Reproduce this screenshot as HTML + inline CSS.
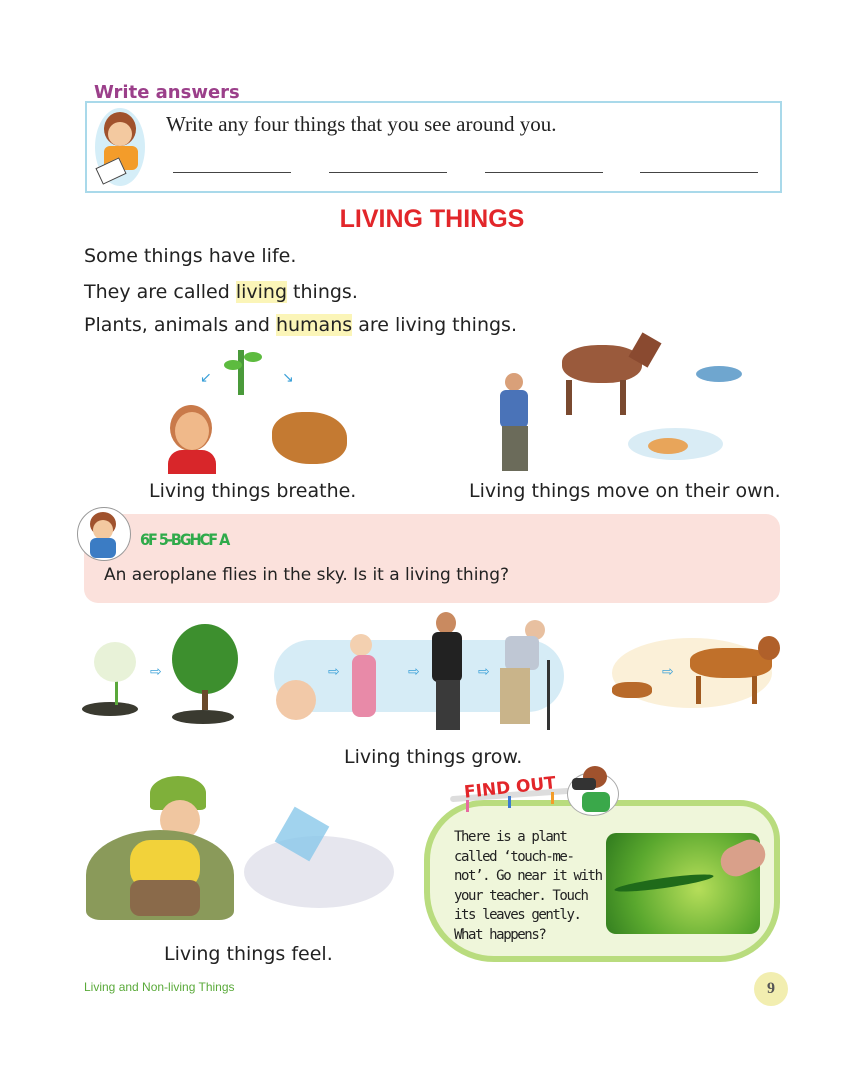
<!DOCTYPE html>
<html><head><meta charset="utf-8"><style>
body{margin:0;width:864px;height:1080px;background:#fff;position:relative;overflow:hidden;font-family:"DejaVu Sans","Liberation Sans",sans-serif;color:#222}
.a{position:absolute}
.t{font-size:19px;color:#222;white-space:nowrap}
.cap{font-size:19px;white-space:nowrap}
.hl{background:#fbf5b8}
.line{position:absolute;top:172px;height:1px;background:#444;width:118px}
.arr{position:absolute;color:#3aa0d8;font-size:14px}
</style></head><body>
<div class="a" style="left:94px;top:82px;font:bold 18px 'DejaVu Sans',sans-serif;color:#9b3f8a;letter-spacing:0">Write answers</div>
<div class="a" style="left:85px;top:101px;width:693px;height:88px;border:2px solid #a9d9ea;background:#fff"></div>
<div class="a" style="left:95px;top:108px;width:50px;height:78px;border-radius:50%;background:#d5eef8"></div>
<div class="a" style="left:104px;top:112px;width:32px;height:34px;border-radius:50%;background:#a0522d"></div>
<div class="a" style="left:108px;top:122px;width:24px;height:24px;border-radius:50%;background:#f3c9a0"></div>
<div class="a" style="left:104px;top:146px;width:34px;height:24px;background:#f39c2a;border-radius:6px"></div>
<div class="a" style="left:98px;top:162px;width:24px;height:16px;background:#fff;border:1px solid #444;transform:rotate(-25deg)"></div>
<div class="a" style="left:166px;top:112px;font:21px 'Liberation Serif',serif;color:#222">Write any four things that you see around you.</div>
<div class="line" style="left:173px"></div><div class="line" style="left:329px"></div><div class="line" style="left:485px"></div><div class="line" style="left:640px"></div>
<div class="a" style="left:0;width:864px;top:205px;text-align:center;font:bold 25px 'Liberation Sans',sans-serif;color:#e2262a">LIVING THINGS</div>
<div class="a t" style="left:84px;top:245px">Some things have life.</div>
<div class="a t" style="left:84px;top:281px">They are called <span class="hl">living</span> things.</div>
<div class="a t" style="left:84px;top:314px">Plants, animals and <span class="hl">humans</span> are living things.</div>
<div class="a" style="left:238px;top:350px;width:6px;height:45px;background:#4a9a3a"></div>
<div class="a" style="left:224px;top:360px;width:18px;height:10px;border-radius:50%;background:#5dbb3f"></div>
<div class="a" style="left:244px;top:352px;width:18px;height:10px;border-radius:50%;background:#5dbb3f"></div>
<div class="arr" style="left:200px;top:370px">↙</div><div class="arr" style="left:282px;top:370px">↘</div>
<div class="a" style="left:170px;top:405px;width:42px;height:46px;border-radius:50%;background:#c97a4a"></div>
<div class="a" style="left:175px;top:412px;width:34px;height:38px;border-radius:50%;background:#f0b98a"></div>
<div class="a" style="left:168px;top:450px;width:48px;height:24px;background:#d8262a;border-radius:14px 14px 0 0"></div>
<div class="a" style="left:272px;top:412px;width:75px;height:52px;border-radius:40% 50% 40% 50%;background:#c47a32"></div>
<div class="a cap" style="left:149px;top:480px">Living things breathe.</div>
<div class="a" style="left:505px;top:373px;width:18px;height:18px;border-radius:50%;background:#d9a079"></div>
<div class="a" style="left:500px;top:390px;width:28px;height:38px;background:#4a73b8;border-radius:6px"></div>
<div class="a" style="left:502px;top:426px;width:26px;height:45px;background:#6b6b5a"></div>
<div class="a" style="left:562px;top:345px;width:80px;height:38px;border-radius:45%;background:#9a5a3c"></div>
<div class="a" style="left:634px;top:336px;width:22px;height:28px;background:#8a4a30;transform:rotate(30deg)"></div>
<div class="a" style="left:566px;top:380px;width:6px;height:35px;background:#7a4a30"></div>
<div class="a" style="left:620px;top:380px;width:6px;height:35px;background:#7a4a30"></div>
<div class="a" style="left:696px;top:366px;width:46px;height:16px;border-radius:50%;background:#6fa6cf"></div>
<div class="a" style="left:628px;top:428px;width:95px;height:32px;border-radius:50%;background:#d9ecf5"></div>
<div class="a" style="left:648px;top:438px;width:40px;height:16px;border-radius:50%;background:#e8a55a"></div>
<div class="a cap" style="left:469px;top:480px">Living things move on their own.</div>
<div class="a" style="left:84px;top:514px;width:696px;height:89px;border-radius:14px;background:#fbe1dc"></div>
<div class="a" style="left:77px;top:507px;width:52px;height:52px;border-radius:50%;background:#fff;border:1px solid #999"></div>
<div class="a" style="left:90px;top:512px;width:26px;height:24px;border-radius:50%;background:#a0522d"></div>
<div class="a" style="left:93px;top:520px;width:20px;height:20px;border-radius:50%;background:#f3c9a0"></div>
<div class="a" style="left:90px;top:538px;width:26px;height:20px;border-radius:6px;background:#3b7cc4"></div>
<div class="a" style="left:140px;top:530px;font:bold 16px 'DejaVu Sans Condensed','Liberation Sans Narrow',sans-serif;color:#2faa4a;letter-spacing:-2px">6F 5-BGHCF A</div>
<div class="a t" style="left:104px;top:565px;font-size:17px">An aeroplane flies in the sky. Is it a living thing?</div>
<div class="a" style="left:82px;top:702px;width:56px;height:14px;border-radius:50%;background:#3a3a30"></div>
<div class="a" style="left:115px;top:660px;width:3px;height:45px;background:#5aa83a"></div>
<div class="a" style="left:94px;top:642px;width:42px;height:40px;border-radius:50%;background:#e8f2d8"></div>
<div class="arr" style="left:150px;top:664px">⇨</div>
<div class="a" style="left:172px;top:624px;width:66px;height:70px;border-radius:50%;background:#3d8f2e"></div>
<div class="a" style="left:202px;top:690px;width:6px;height:20px;background:#6a4a2a"></div>
<div class="a" style="left:172px;top:710px;width:62px;height:14px;border-radius:50%;background:#3a3a30"></div>
<div class="a" style="left:274px;top:640px;width:290px;height:72px;border-radius:36px;background:#d6ecf6"></div>
<div class="a" style="left:276px;top:680px;width:40px;height:40px;border-radius:50%;background:#f2c9a8"></div>
<div class="a" style="left:350px;top:634px;width:22px;height:22px;border-radius:50%;background:#f3d0b0"></div>
<div class="a" style="left:352px;top:655px;width:24px;height:62px;border-radius:8px;background:#e88aa8"></div>
<div class="a" style="left:436px;top:612px;width:20px;height:22px;border-radius:50%;background:#c98a60"></div>
<div class="a" style="left:432px;top:632px;width:30px;height:50px;background:#222;border-radius:6px"></div>
<div class="a" style="left:436px;top:680px;width:24px;height:50px;background:#3a3a3a"></div>
<div class="a" style="left:525px;top:620px;width:20px;height:20px;border-radius:50%;background:#e8c0a0"></div>
<div class="a" style="left:505px;top:636px;width:34px;height:34px;background:#bfc7d4;border-radius:6px"></div>
<div class="a" style="left:500px;top:668px;width:30px;height:56px;background:#c9b48a"></div>
<div class="a" style="left:547px;top:660px;width:3px;height:70px;background:#333"></div>
<div class="arr" style="left:328px;top:664px">⇨</div><div class="arr" style="left:408px;top:664px">⇨</div><div class="arr" style="left:478px;top:664px">⇨</div>
<div class="a" style="left:612px;top:638px;width:160px;height:70px;border-radius:50%;background:#fbf0d8"></div>
<div class="a" style="left:612px;top:682px;width:40px;height:16px;border-radius:40%;background:#b86a2a"></div>
<div class="arr" style="left:662px;top:664px">⇨</div>
<div class="a" style="left:690px;top:648px;width:82px;height:30px;border-radius:40%;background:#c0702a"></div>
<div class="a" style="left:758px;top:636px;width:22px;height:24px;border-radius:50%;background:#b0602a"></div>
<div class="a" style="left:696px;top:676px;width:5px;height:28px;background:#a05a20"></div>
<div class="a" style="left:752px;top:676px;width:5px;height:28px;background:#a05a20"></div>
<div class="a cap" style="left:344px;top:746px">Living things grow.</div>
<div class="a" style="left:150px;top:776px;width:56px;height:34px;border-radius:50% 50% 10% 10%;background:#7fb03a"></div>
<div class="a" style="left:160px;top:800px;width:40px;height:40px;border-radius:50%;background:#f0c6a0"></div>
<div class="a" style="left:86px;top:830px;width:148px;height:90px;border-radius:50% 50% 10% 10%;background:#8a9a5a"></div>
<div class="a" style="left:130px;top:840px;width:70px;height:50px;border-radius:20px;background:#f2d23a"></div>
<div class="a" style="left:130px;top:880px;width:70px;height:36px;border-radius:10px;background:#8a6a4a"></div>
<div class="a" style="left:244px;top:836px;width:150px;height:72px;border-radius:50%;background:#e6e6ee"></div>
<div class="a" style="left:282px;top:814px;width:40px;height:40px;background:#8ac8ea;transform:rotate(30deg);opacity:.8"></div>
<div class="a cap" style="left:164px;top:943px">Living things feel.</div>
<div class="a" style="left:424px;top:800px;width:356px;height:162px;border:6px solid #b9dc7e;border-radius:60px 40px 60px 70px;background:#eff6da;box-sizing:border-box"></div>
<div class="a" style="left:450px;top:792px;width:120px;height:6px;background:#ddd;border-radius:3px;transform:rotate(-4deg)"></div>
<div class="a" style="left:464px;top:778px;font:bold 17px 'DejaVu Sans',sans-serif;color:#e2262a;transform:rotate(-6deg)">FIND OUT</div>
<div class="a" style="left:466px;top:800px;width:3px;height:12px;background:#e86aa0"></div>
<div class="a" style="left:508px;top:796px;width:3px;height:12px;background:#3a7ad0"></div>
<div class="a" style="left:551px;top:792px;width:3px;height:12px;background:#f39c2a"></div>
<div class="a" style="left:567px;top:772px;width:50px;height:42px;border-radius:50%;background:#fff;border:1px solid #aaa"></div>
<div class="a" style="left:583px;top:766px;width:24px;height:22px;border-radius:50%;background:#a0522d"></div>
<div class="a" style="left:572px;top:778px;width:24px;height:12px;background:#333;border-radius:4px"></div>
<div class="a" style="left:582px;top:792px;width:28px;height:20px;background:#3aa84a;border-radius:6px"></div>
<div class="a" style="left:454px;top:828px;font:14px 'DejaVu Sans Mono','Liberation Mono',monospace;line-height:19.5px;color:#222;letter-spacing:-1.4px">There is a plant<br>called ‘touch-me-<br>not’. Go near it with<br>your teacher. Touch<br>its leaves gently.<br>What happens?</div>
<div class="a" style="left:606px;top:833px;width:154px;height:101px;border-radius:10px;background:radial-gradient(circle at 60% 55%,#b6de5a,#5aa82e 60%,#2f7a1e)"></div>
<div class="a" style="left:720px;top:843px;width:46px;height:30px;border-radius:20px;background:#d9a08a;transform:rotate(-25deg)"></div>
<div class="a" style="left:614px;top:878px;width:100px;height:10px;background:#1f6a1a;border-radius:50%;transform:rotate(-8deg)"></div>
<div class="a" style="left:84px;top:980px;font:12px 'Liberation Sans',sans-serif;color:#5aaa3a">Living and Non-living Things</div>
<div class="a" style="left:754px;top:972px;width:34px;height:34px;border-radius:50%;background:#f2eeb0;text-align:center;line-height:34px;font:bold 16px 'Liberation Serif',serif;color:#555"><span style="line-height:34px">9</span></div>
</body></html>
